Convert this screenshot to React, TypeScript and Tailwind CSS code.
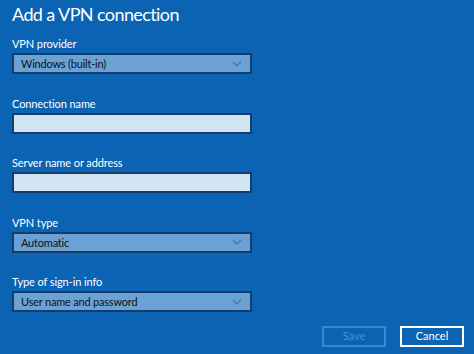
import * as React from "react";

const font = { fontFamily: 'Lato, "Noto Sans", sans-serif' };

function Chevron() {
  return (
    <svg width="10" height="6" viewBox="0 0 10 6" className="shrink-0">
      <polyline
        points="1,1 5,5 9,1"
        fill="none"
        stroke="#3f74ad"
        strokeWidth="1.2"
      />
    </svg>
  );
}

function Select({ value }: { value: string }) {
  return (
    <div className="flex h-[21px] w-[240px] items-center justify-between border-2 border-[#163d6a] bg-[#6aa2d5] pl-[7px] pr-[8px]">
      <span className="text-[11px] leading-none tracking-[-0.2px] text-[#111]">{value}</span>
      <Chevron />
    </div>
  );
}

function TextBox() {
  return (
    <div className="h-[21px] w-[240px] border-2 border-[#163d6a] bg-[#d1e4f3]" />
  );
}

function Field({ label, children }: { label: string; children: React.ReactNode }) {
  return (
    <div className="flex flex-col">
      <label className="mb-[2px] text-[11px] leading-[14px] tracking-[-0.1px] text-white">{label}</label>
      {children}
    </div>
  );
}

export default function App() {
  return (
    <div className="h-[354px] w-[474px] overflow-hidden bg-[#0b63b3] px-3" style={font}>
      <h1 className="text-[18px] leading-[28px] tracking-[-0.6px] text-white">Add a VPN connection</h1>

      {/* Fields */}
      <div className="mt-[9px] flex flex-col gap-y-[22.5px]">
        <Field label="VPN provider">
          <Select value="Windows (built-in)" />
        </Field>
        <Field label="Connection name">
          <TextBox />
        </Field>
        <Field label="Server name or address">
          <TextBox />
        </Field>
        <Field label="VPN type">
          <Select value="Automatic" />
        </Field>
        <Field label="Type of sign-in info">
          <Select value="User name and password" />
        </Field>
      </div>

      {/* Buttons */}
      <div className="mt-[14px] flex justify-end gap-[14px]">
        <button className="h-[21px] w-[64px] border-2 border-[#3f86c9] text-[11px] text-[#4f8fcc]">
          Save
        </button>
        <button className="mr-[-2px] h-[21px] w-[64px] border-2 border-white text-[11px] text-white">
          Cancel
        </button>
      </div>
    </div>
  );
}
